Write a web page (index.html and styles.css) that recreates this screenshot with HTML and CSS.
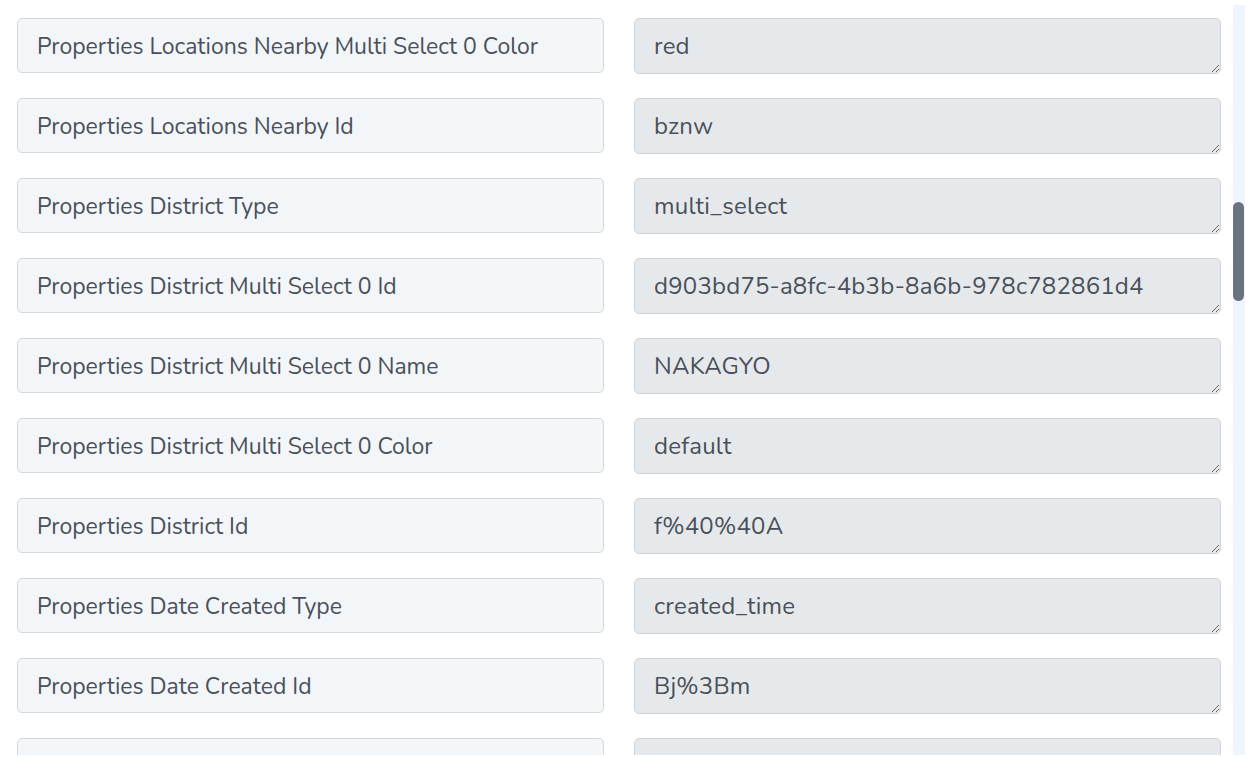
FILE: index.html
```html
<!DOCTYPE html>
<html lang="en">
<head>
    <meta charset="UTF-8">
    <meta name="viewport" content="width=device-width, initial-scale=1.0">
    <title>Field mapping</title>
    <link rel="stylesheet" href="styles.css">
</head>
<body>
    <div class="panel">
        <div class="fields">
            <div class="row">
                <input class="key" type="text" value="Properties Locations Nearby Multi Select 0 Color" readonly>
                <textarea class="val" readonly>red</textarea>
            </div>
            <div class="row">
                <input class="key" type="text" value="Properties Locations Nearby Id" readonly>
                <textarea class="val" readonly>bznw</textarea>
            </div>
            <div class="row">
                <input class="key" type="text" value="Properties District Type" readonly>
                <textarea class="val" readonly>multi_select</textarea>
            </div>
            <div class="row">
                <input class="key" type="text" value="Properties District Multi Select 0 Id" readonly>
                <textarea class="val" readonly>d903bd75-a8fc-4b3b-8a6b-978c782861d4</textarea>
            </div>
            <div class="row">
                <input class="key" type="text" value="Properties District Multi Select 0 Name" readonly>
                <textarea class="val" readonly>NAKAGYO</textarea>
            </div>
            <div class="row">
                <input class="key" type="text" value="Properties District Multi Select 0 Color" readonly>
                <textarea class="val" readonly>default</textarea>
            </div>
            <div class="row">
                <input class="key" type="text" value="Properties District Id" readonly>
                <textarea class="val" readonly>f%40%40A</textarea>
            </div>
            <div class="row">
                <input class="key" type="text" value="Properties Date Created Type" readonly>
                <textarea class="val" readonly>created_time</textarea>
            </div>
            <div class="row">
                <input class="key" type="text" value="Properties Date Created Id" readonly>
                <textarea class="val" readonly>Bj%3Bm</textarea>
            </div>
            <div class="row">
                <input class="key" type="text" value="Properties Date Created Created Time" readonly>
                <textarea class="val" readonly></textarea>
            </div>
        </div>
        <div class="track">
            <div class="thumb"></div>
        </div>
    </div>
</body>
</html>
```
FILE: styles.css
```css
*{
    margin: 0;
    padding: 0;
    box-sizing: border-box;
}
html,body{
    width: 100%;
    height: 100%;
    background-color: #ffffff;
    font-family: "Nunito", "Noto Sans", "Open Sans", sans-serif;
}
.panel{
    display: flex;
    height: 755px;
    overflow: hidden;
}
.fields{
    flex: none;
    width: 1221px;
    padding-left: 17px;
    padding-top: 18px;
    display: flex;
    flex-direction: column;
    gap: 24px;
}
.row{
    flex: none;
    display: flex;
    align-items: flex-start;
    gap: 30px;
}
.key,.val{
    width: 587px;
    font-family: inherit;
    font-size: 23px;
    color: #4a5059;
    border-radius: 5px;
    outline: none;
}
.key{
    height: 55px;
    padding: 1px 19px 0;
    background-color: #f3f6f9;
    border: 1px solid #d3d8df;
}
.val{
    height: 56px;
    padding: 12px 19px 0;
    font-size: 24px;
    letter-spacing: 0.2px;
    line-height: 30px;
    background-color: #e6e9ec;
    border: 1px solid #cfd3d9;
    resize: vertical;
    overflow: hidden;
}
/* custom scrollbar on the right */
.track{
    flex: none;
    width: 12px;
    margin-left: 12px;
    margin-top: 5px;
    background-color: #eef5fe;
}
.thumb{
    width: 11px;
    height: 99px;
    margin-top: 197px;
    border-radius: 6px;
    background-color: #6b737e;
}
```
